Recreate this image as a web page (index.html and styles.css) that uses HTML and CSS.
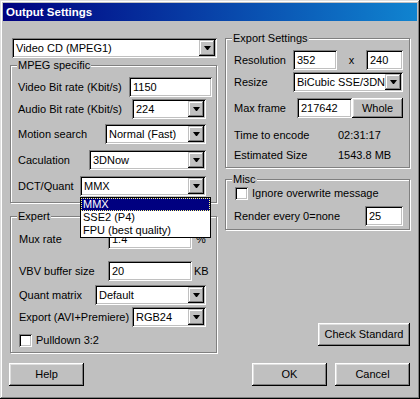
FILE: index.html
```html
<!DOCTYPE html>
<html lang="en">
<head>
  <meta charset="UTF-8">
  <title>Output Settings</title>
  <link rel="stylesheet" href="styles.css">
</head>
<body>
<div class="window">
  <div class="titlebar">Output Settings</div>
  <div class="client">
    <div class="columns">
      <div class="col-left">
        <div class="combo main-format"><span class="value">Video CD (MPEG1)</span><span class="drop"></span></div>

        <div class="group mpeg">
          <span class="group-title">MPEG specific</span>
          <div class="row">
            <span>Video Bit rate (Kbit/s)</span>
            <div class="field ctl w-video">1150</div>
          </div>
          <div class="row mt2">
            <span>Audio Bit rate (Kbit/s)</span>
            <div class="combo ctl w-audio"><span class="value">224</span><span class="drop"></span></div>
          </div>
          <div class="row mt5">
            <span>Motion search</span>
            <div class="combo ctl w-motion"><span class="value">Normal (Fast)</span><span class="drop"></span></div>
          </div>
          <div class="row mt6">
            <span>Caculation</span>
            <div class="combo ctl w-calc"><span class="value">3DNow</span><span class="drop"></span></div>
          </div>
          <div class="row mt6">
            <span>DCT/Quant</span>
            <div class="combo ctl w-dct">
              <span class="value">MMX</span><span class="drop"></span>
              <ul class="droplist">
                <li class="selected">MMX</li>
                <li>SSE2 (P4)</li>
                <li>FPU (best quality)</li>
              </ul>
            </div>
          </div>
        </div>

        <div class="group expert">
          <span class="group-title">Expert</span>
          <div class="row">
            <span>Mux rate</span>
            <div class="field ctl w-unit">1.4</div>
            <span class="unit pct">%</span>
          </div>
          <div class="row mt12">
            <span>VBV buffer size</span>
            <div class="field ctl w-unit">20</div>
            <span class="unit kb">KB</span>
          </div>
          <div class="row mt4">
            <span>Quant matrix</span>
            <div class="combo ctl w-quant"><span class="value">Default</span><span class="drop"></span></div>
          </div>
          <div class="row mt2">
            <span>Export (AVI+Premiere)</span>
            <div class="combo ctl w-audio"><span class="value">RGB24</span><span class="drop"></span></div>
          </div>
          <div class="row check-row mt7">
            <span class="checkbox"></span>
            <span>Pulldown 3:2</span>
          </div>
        </div>
      </div>

      <div class="col-right">
        <div class="group export">
          <span class="group-title">Export Settings</span>
          <div class="row">
            <span class="lbl-59">Resolution</span>
            <div class="field w-res">352</div>
            <span class="times">x</span>
            <div class="field w-res2">240</div>
          </div>
          <div class="row mt2">
            <span class="lbl-59">Resize</span>
            <div class="combo w-resize"><span class="value">BiCubic SSE/3DNow</span><span class="drop"></span></div>
          </div>
          <div class="row mt6">
            <span class="lbl-63">Max frame</span>
            <div class="field w-frame">217642</div>
            <button class="btn whole">Whole</button>
          </div>
          <div class="info-row mt11">
            <span class="lbl-104">Time to encode</span>
            <span>02:31:17</span>
          </div>
          <div class="info-row mt7">
            <span class="lbl-104">Estimated Size</span>
            <span>1543.8 MB</span>
          </div>
        </div>

        <div class="group misc">
          <span class="group-title">Misc</span>
          <div class="check-row misc-check">
            <span class="checkbox"></span>
            <span>Ignore overwrite message</span>
          </div>
          <div class="row mt6">
            <span>Render every 0=none</span>
            <div class="field ctl w-render">25</div>
          </div>
        </div>

        <button class="btn check-std">Check Standard</button>
      </div>
    </div>

    <div class="buttons">
      <button class="btn">Help</button>
      <button class="btn ok">OK</button>
      <button class="btn cancel">Cancel</button>
    </div>
  </div>
</div>
</body>
</html>
```

FILE: styles.css
```css
body {
  margin: 0;
  font-family: "Liberation Sans", Arial, sans-serif;
  font-size: 11px;
  line-height: 13px;
  color: #000;
  background-color: #c0c0c0;
}

.window {
  width: 420px;
  height: 399px;
  box-sizing: border-box;
  padding: 3px;
  background-color: #c0c0c0;
  box-shadow: inset -1px -1px #000, inset 1px 1px #dfdfdf, inset -2px -2px #808080, inset 2px 2px #fff;
}

.titlebar {
  height: 18px;
  padding-left: 3px;
  background: linear-gradient(to right, #000080, #1084d0);
  color: #fff;
  font-weight: bold;
  font-size: 11.5px;
  line-height: 18px;
}

.client {
  padding: 17px 7px 0 6px;
}

.columns {
  display: flex;
  gap: 8px;
}

.col-left {
  width: 208px;
}

.col-right {
  width: 185px;
  display: flex;
  flex-direction: column;
}

/* etched group box */
.group {
  position: relative;
  box-sizing: border-box;
  border: 1px solid #808080;
  box-shadow: 1px 1px 0 #fff, inset 1px 1px 0 #fff;
}

.group-title {
  position: absolute;
  top: -7px;
  left: 6px;
  padding: 0 1px;
  background-color: #c0c0c0;
}

.mpeg {
  width: 207px;
  margin: 7px 0 0 1px;
  padding: 11px 10px 6px 7px;
}

.expert {
  width: 207px;
  margin: 13px 0 0 1px;
  padding: 12px 10px 5px 8px;
}

.export {
  padding: 11px 6px 5px 8px;
}

.misc {
  margin-top: 11px;
  padding: 7px 6px 3px 8px;
}

.row {
  display: flex;
  align-items: center;
  height: 20px;
}

.ctl {
  margin-left: auto;
}

.mt2 { margin-top: 2px; }
.mt4 { margin-top: 4px; }
.mt5 { margin-top: 5px; }
.mt6 { margin-top: 6px; }
.mt7 { margin-top: 7px; }
.mt11 { margin-top: 11px; }
.mt12 { margin-top: 12px; }

.field {
  box-sizing: border-box;
  height: 20px;
  padding: 0 2px 0 4px;
  display: flex;
  align-items: center;
  white-space: nowrap;
  overflow: hidden;
  background-color: #fff;
  box-shadow: inset 1px 1px #808080, inset -1px -1px #fff, inset 2px 2px #000, inset -2px -2px #c0c0c0;
}

.combo {
  position: relative;
  box-sizing: border-box;
  height: 20px;
  padding: 2px;
  display: flex;
  background-color: #fff;
  box-shadow: inset 1px 1px #808080, inset -1px -1px #fff, inset 2px 2px #000, inset -2px -2px #c0c0c0;
}

.combo .value {
  flex: 1;
  min-width: 0;
  padding-left: 2px;
  line-height: 16px;
  white-space: nowrap;
  overflow: hidden;
}

.combo .drop {
  width: 16px;
  height: 16px;
  display: flex;
  align-items: center;
  justify-content: center;
  background-color: #c0c0c0;
  box-shadow: inset -1px -1px #000, inset 1px 1px #c0c0c0, inset -2px -2px #808080, inset 2px 2px #fff;
}

.combo .drop::after {
  content: "";
  width: 1px;
  height: 0;
  border-top: 4px solid #000;
  border-left: 3px solid transparent;
  border-right: 3px solid transparent;
}

.main-format {
  width: 205px;
  margin-left: 3px;
}

.w-video {
  width: 83px;
  margin-right: -6px;
}

.w-audio { width: 74px; }
.w-motion { width: 101px; }
.w-calc { width: 117px; }
.w-dct { width: 126px; }
.w-quant { width: 111px; }
.w-unit { width: 84px; }
.w-res { width: 44px; }
.w-res2 { width: 37px; }
.w-resize { width: 110px; }
.w-frame { width: 55px; }
.w-render { width: 38px; }

.unit {
  width: 14px;
  box-sizing: border-box;
}

.pct { padding-left: 4px; }
.kb { padding-left: 2px; }

.droplist {
  position: absolute;
  z-index: 10;
  top: 21px;
  left: 0;
  width: 131px;
  box-sizing: border-box;
  margin: 0;
  padding: 0;
  list-style: none;
  background-color: #fff;
  border: 1px solid #000;
}

.droplist li {
  height: 13px;
  padding-left: 2px;
  white-space: nowrap;
}

.droplist .selected {
  background-color: #000080;
  color: #fff;
  outline: 1px dotted #ffff80;
  outline-offset: -1px;
}

.checkbox {
  width: 13px;
  height: 13px;
  margin-right: 4px;
  background-color: #fff;
  box-shadow: inset 1px 1px #808080, inset -1px -1px #fff, inset 2px 2px #000, inset -2px -2px #c0c0c0;
}

.check-row {
  display: flex;
  align-items: center;
  height: 13px;
}

.misc-check {
  margin-left: 1px;
}

.lbl-59 { width: 59px; }
.lbl-63 { width: 63px; }
.lbl-104 { width: 104px; }

.times {
  width: 29px;
  text-align: center;
}

.info-row {
  display: flex;
  align-items: center;
  height: 13px;
}

.btn {
  box-sizing: border-box;
  width: 75px;
  height: 23px;
  padding: 0;
  border: none;
  font: inherit;
  color: #000;
  background-color: #c0c0c0;
  box-shadow: inset -1px -1px #000, inset 1px 1px #fff, inset -2px -2px #808080, inset 2px 2px #dfdfdf;
}

.whole {
  width: 51px;
  height: 20px;
}

.check-std {
  width: 92px;
  margin-top: 93px;
  align-self: flex-end;
}

.buttons {
  display: flex;
  margin-top: 10px;
}

.ok {
  margin-left: auto;
}

.cancel {
  margin-left: 8px;
}
```
